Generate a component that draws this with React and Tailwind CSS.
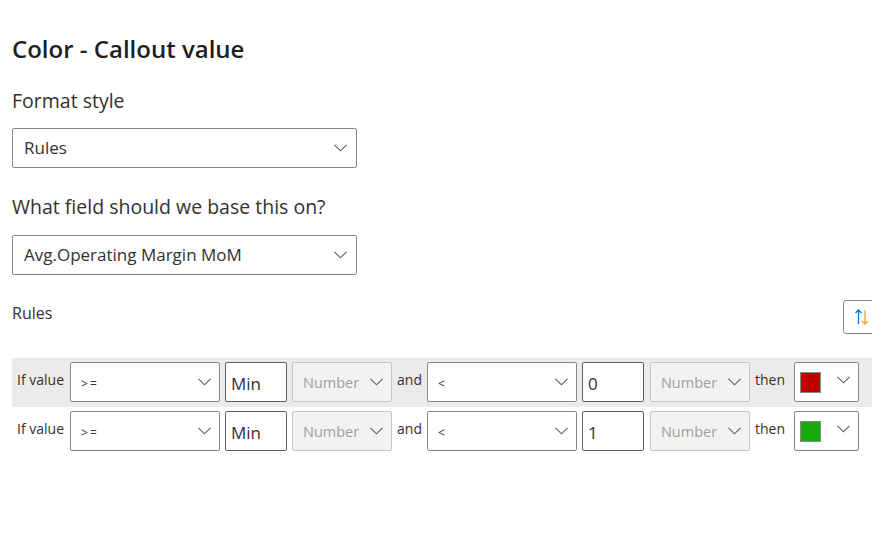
import React from "react";

const font = { fontFamily: '"Open Sans", "Noto Sans", sans-serif' };

function Chevron({ className = "" }) {
  return (
    <svg width="13" height="8" viewBox="0 0 13 8" className={className} fill="none">
      <path d="M0.5 0.8 L6.5 6.8 L12.5 0.8" stroke="#605e5c" strokeWidth="1.1" />
    </svg>
  );
}

function Dropdown({ value }) {
  return (
    <div className="flex h-[40px] w-[345px] items-center justify-between rounded-[2px] border border-[#8a8886] bg-white pl-[11px] pr-[9px]">
      <span className="text-[17px] text-[#323130]">{value}</span>
      <Chevron />
    </div>
  );
}

function Operator({ op }) {
  return (
    <div className="flex h-[40px] w-[150px] items-center justify-between rounded-[2px] border border-[#8a8886] bg-white pl-[10px] pr-[8px]">
      <span className="pt-[3px] text-[12px] tracking-[2px] text-[#323130]">{op}</span>
      <Chevron />
    </div>
  );
}

function ValueInput({ value }) {
  return (
    <div className="flex h-[40px] w-[62px] items-center rounded-[2px] border border-[#605e5c] bg-white pl-[5px]">
      <span className="pt-[3px] text-[17px] text-[#323130]">{value}</span>
    </div>
  );
}

function NumberSelect() {
  return (
    <div className="flex h-[40px] w-[100px] items-center justify-between rounded-[2px] border border-[#c8c6c4] bg-[#f3f2f1] pl-[10px] pr-[8px]">
      <span className="pt-[2px] text-[14.5px] text-[#a19f9d]">Number</span>
      <Chevron />
    </div>
  );
}

function ColorPick({ color }) {
  return (
    <div className="flex h-[40px] w-[65px] items-start justify-between rounded-[2px] border border-[#8a8886] bg-white pl-[5px] pr-[8px] pt-[9px]">
      <div className="h-[21px] w-[21px] border border-[#8a8886]" style={{ backgroundColor: color }} />
      <Chevron className="mt-[4px]" />
    </div>
  );
}

function RuleRow({ first, value, color, shaded }) {
  return (
    <div className={`flex h-[49px] items-start pl-[5px] pt-[4px] ${shaded ? "bg-[#edebe9]" : "bg-white"}`}>
      <span className="mr-[6px] mt-[7px] text-[14px] text-[#323130]">If value</span>
      <Operator op=">=" />
      <div className="ml-[5px]"><ValueInput value={first} /></div>
      <div className="ml-[5px]"><NumberSelect /></div>
      <span className="ml-[5px] mr-[5px] mt-[7px] text-[14px] text-[#323130]">and</span>
      <Operator op="<" />
      <div className="ml-[5px]"><ValueInput value={value} /></div>
      <div className="ml-[6px]"><NumberSelect /></div>
      <span className="ml-[5px] mr-[9px] mt-[7px] text-[14px] text-[#323130]">then</span>
      <ColorPick color={color} />
    </div>
  );
}

export default function App() {
  return (
    <div className="h-[533px] w-[872px] overflow-hidden bg-white" style={font}>
      <div className="w-[880px] pl-[12px] pt-[33px]">
        <h1 className="text-[24px] font-semibold leading-[32px] text-[#201f1e]">Color - Callout value</h1>
        <div className="mt-[24px] text-[19.5px] leading-[24px] text-[#323130]">Format style</div>
        <div className="mt-[15px]"><Dropdown value="Rules" /></div>
        <div className="mt-[27px] text-[19.5px] leading-[24px] text-[#323130]">What field should we base this on?</div>
        <div className="mt-[16px]"><Dropdown value="Avg.Operating Margin MoM" /></div>
        <div className="mt-[25px] flex items-start justify-between">
          <span className="mt-[2px] text-[16px] leading-[22px] text-[#323130]">Rules</span>
          <div className="flex h-[34px] w-[37px] items-center justify-center rounded-[3px] border border-[#8a8886] bg-white">
            <svg width="16" height="18" viewBox="0 0 16 18" fill="none">
              <path d="M4.5 16 V2 M1.5 5 L4.5 2 L7.5 5" stroke="#0078d4" strokeWidth="1.3" />
              <path d="M11 2 V16 M8 13 L11 16 L14 13" stroke="#e8a33d" strokeWidth="1.3" />
            </svg>
          </div>
        </div>
        <div className="mt-[24px]">
          <RuleRow first="Min" value="0" color="#c00000" shaded />
          <RuleRow first="Min" value="1" color="#16ab0a" />
        </div>
      </div>
    </div>
  );
}
